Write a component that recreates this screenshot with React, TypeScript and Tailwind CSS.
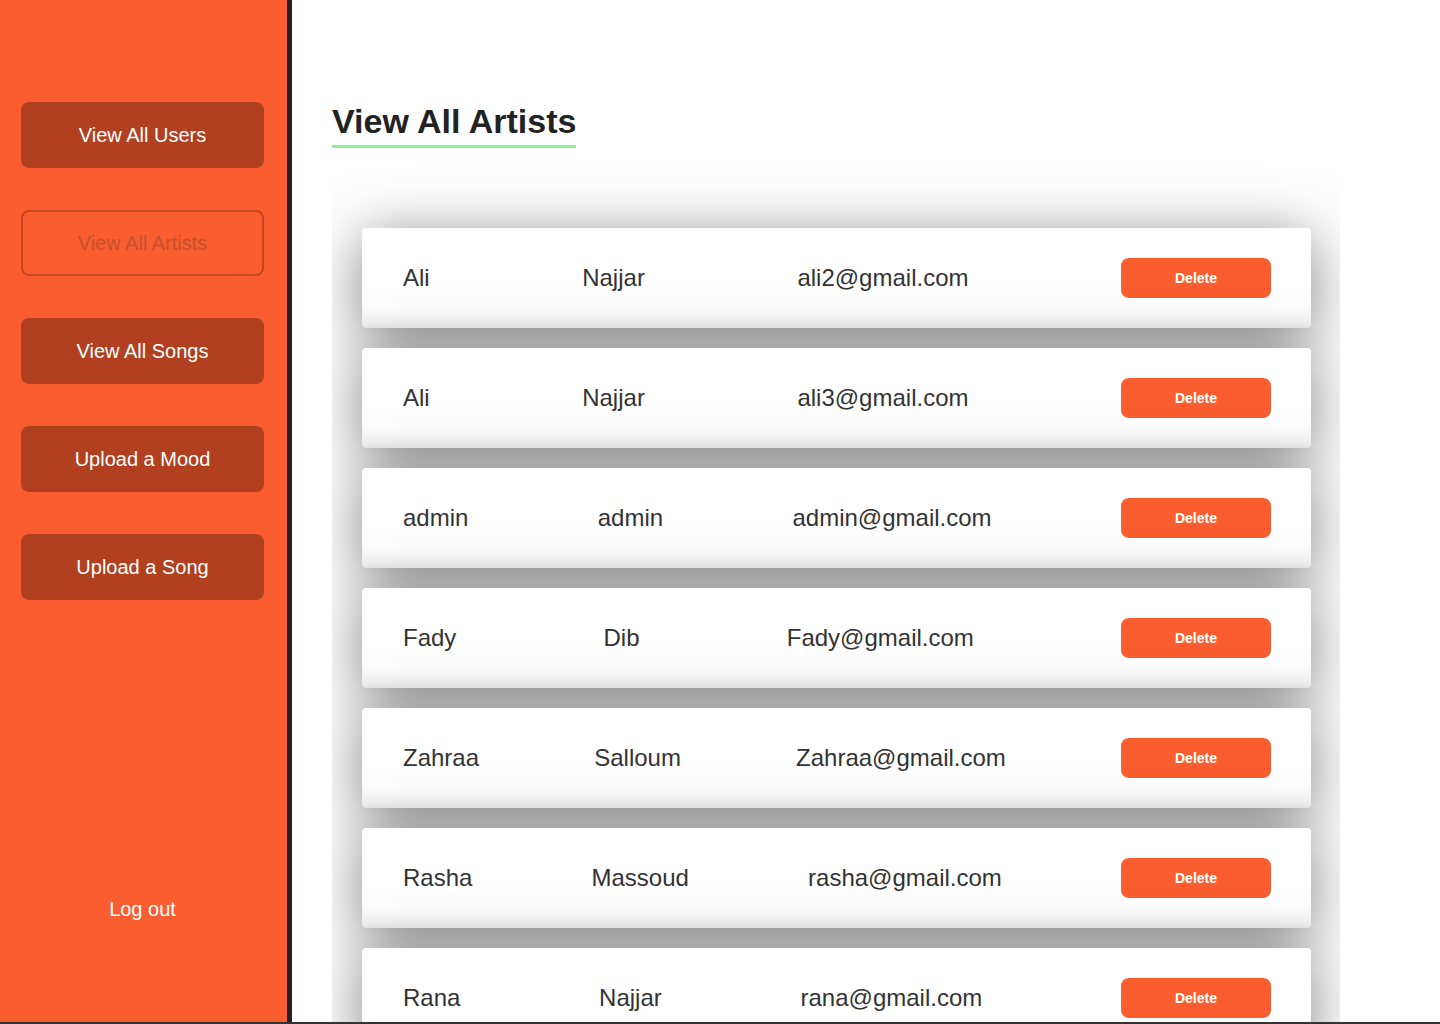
const artists = [
  { first: 'Ali', last: 'Najjar', email: 'ali2@gmail.com' },
  { first: 'Ali', last: 'Najjar', email: 'ali3@gmail.com' },
  { first: 'admin', last: 'admin', email: 'admin@gmail.com' },
  { first: 'Fady', last: 'Dib', email: 'Fady@gmail.com' },
  { first: 'Zahraa', last: 'Salloum', email: 'Zahraa@gmail.com' },
  { first: 'Rasha', last: 'Massoud', email: 'rasha@gmail.com' },
  { first: 'Rana', last: 'Najjar', email: 'rana@gmail.com' },
]

const navItems = ['View All Users', 'View All Artists', 'View All Songs', 'Upload a Mood', 'Upload a Song']

function Sidebar() {
  return (
    <aside className="w-[292px] shrink-0 h-full bg-[#fa5e30] border-r-[5px] border-[#222] flex flex-col pt-[102px] pl-[21px]">
      <div className="flex flex-col gap-[42px]">
        {navItems.map((item) =>
          item === 'View All Artists' ? (
            <button
              key={item}
              className="w-[243px] h-[66px] rounded-lg border-2 border-[#c7461f] text-[#c4512c] text-[20px]"
            >
              {item}
            </button>
          ) : (
            <button key={item} className="w-[243px] h-[66px] rounded-lg bg-[#b04020] text-white text-[20px]">
              {item}
            </button>
          )
        )}
      </div>
      <div className="mt-auto mb-[98px] w-[243px] text-center text-white text-[20px]">Log out</div>
    </aside>
  )
}

function ArtistRow({ first, last, email }: { first: string; last: string; email: string }) {
  return (
    <div className="h-[100px] shrink-0 bg-white rounded-[4px] flex items-center justify-between pl-[41px] pr-[40px] shadow-[0_10px_60px_rgba(0,0,0,0.5),inset_0_-14px_20px_-10px_rgba(0,0,0,0.09)]">
      <span className="text-[24px] text-[#333]">{first}</span>
      <span className="text-[24px] text-[#333]">{last}</span>
      <span className="text-[24px] text-[#333]">{email}</span>
      <button className="w-[150px] h-[40px] rounded-lg bg-[#fa5e30] text-white text-[14px] font-bold">Delete</button>
    </div>
  )
}

export default function App() {
  return (
    <div
      className="w-[1440px] h-[1024px] flex overflow-hidden bg-white border-b-2 border-[#333]"
      style={{ fontFamily: '"Liberation Sans", Arial, sans-serif' }}
    >
      <Sidebar />
      <main className="flex-1 h-full flex flex-col pl-[40px] pt-[98px] overflow-hidden">
        <div className="self-start">
          <h1 className="text-[34px] leading-[46px] font-bold text-[#222]">View All Artists</h1>
          <div className="h-[3px] bg-[#90ee90] mt-[1px]" />
        </div>
        <section className="w-[1008px] flex-1 overflow-hidden bg-white pl-[30px] pr-[29px] pt-[80px] flex flex-col gap-[20px]">
          {artists.map((a, i) => (
            <ArtistRow key={i} {...a} />
          ))}
        </section>
      </main>
    </div>
  )
}
